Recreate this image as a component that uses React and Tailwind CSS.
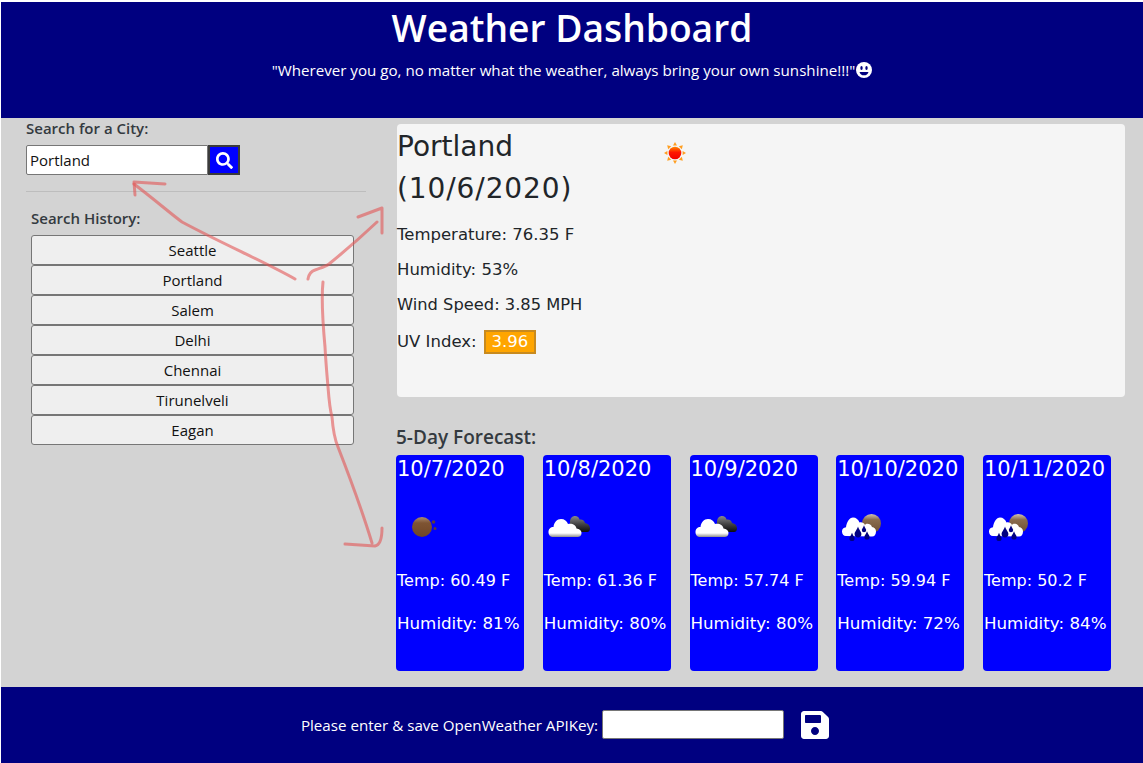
import { FaSave, FaSearch } from "react-icons/fa";

const history = ["Seattle", "Portland", "Salem", "Delhi", "Chennai", "Tirunelveli", "Eagan"];

const forecast = [
  { date: "10/7/2020", icon: "moon", temp: "60.49", humidity: "81" },
  { date: "10/8/2020", icon: "clouds", temp: "61.36", humidity: "80" },
  { date: "10/9/2020", icon: "clouds", temp: "57.74", humidity: "80" },
  { date: "10/10/2020", icon: "rain", temp: "59.94", humidity: "72" },
  { date: "10/11/2020", icon: "rain", temp: "50.2", humidity: "84" },
];

function SunIcon() {
  return (
    <svg width="24" height="24" viewBox="0 0 24 24">
      <defs>
        <linearGradient id="sunFill" x1="0" y1="0" x2="0" y2="1">
          <stop offset="0" stopColor="#ff8a00" />
          <stop offset="0.45" stopColor="#ff1500" />
          <stop offset="1" stopColor="#f00000" />
        </linearGradient>
      </defs>
      <g fill="#ff9d1e">
        <path d="M12 1l2 3.4h-4z" />
        <path d="M12 23l2-3.4h-4z" />
        <path d="M1 12l3.4 2v-4z" />
        <path d="M23 12l-3.4 2v-4z" />
        <path d="M4.2 4.2l4 1-3 3z" />
        <path d="M19.8 4.2l-4 1 3 3z" />
        <path d="M4.2 19.8l4-1-3-3z" />
        <path d="M19.8 19.8l-4-1 3-3z" />
      </g>
      <circle cx="12" cy="12" r="6.3" fill="url(#sunFill)" />
    </svg>
  );
}

function MoonIcon() {
  return (
    <svg width="50" height="50" viewBox="0 0 50 50">
      <defs>
        <linearGradient id="moonFill" x1="0" y1="0" x2="0" y2="1">
          <stop offset="0" stopColor="#a98a6f" />
          <stop offset="0.3" stopColor="#7e5433" />
          <stop offset="1" stopColor="#6f4526" />
        </linearGradient>
      </defs>
      <circle cx="25" cy="26" r="10" fill="url(#moonFill)" />
      <circle cx="36.500" cy="21" r="1.800" fill="#5d3c3a" />
      <circle cx="38" cy="27.500" r="1.500" fill="#5d3c3a" />
    </svg>
  );
}

function CloudsIcon() {
  return (
    <svg width="50" height="50" viewBox="0 0 50 50">
      <defs>
        <linearGradient id="darkCloud" x1="0" y1="0" x2="0" y2="1">
          <stop offset="0" stopColor="#8a8a8a" />
          <stop offset="0.5" stopColor="#444" />
          <stop offset="1" stopColor="#0c0c0c" />
        </linearGradient>
        <linearGradient id="whiteCloud" x1="0" y1="0" x2="0" y2="1">
          <stop offset="0" stopColor="#fff" />
          <stop offset="0.78" stopColor="#fff" />
          <stop offset="1" stopColor="#8d8d8d" />
        </linearGradient>
      </defs>
      <path d="M26 31V21c0-4 2.500-6 5-6 2.500 0 4 1.500 4.500 3.500 3-.5 5 1 5.500 3.500 3 .5 5 2.500 5 5.500 0 1.700-1 3.500-3 3.500z" fill="url(#darkCloud)" />
      <path d="M9 36c-3 0-4.500-2.300-4.500-5 0-3 2-5 5-5 .5-4.500 3.500-8 7.500-8 3.500 0 6 2 7 5 4-1 8 1 8.500 4.500 3 .3 5 2 5 4.500 0 2.500-1.500 4-4 4z" fill="url(#whiteCloud)" />
    </svg>
  );
}

function RainIcon() {
  const drop = (x, y, r) => (
    <path
      key={x}
      d={`M${x} ${y - 2.2 * r}C${x + 0.4 * r} ${y - r} ${x + r} ${y - 0.6 * r} ${x + r} ${y}A${r} ${r} 0 0 1 ${x - r} ${y}C${x - r} ${y - 0.6 * r} ${x - 0.4 * r} ${y - r} ${x} ${y - 2.2 * r}z`}
      fill="#000080"
    />
  );
  return (
    <svg width="50" height="50" viewBox="0 0 50 50">
      <defs>
        <linearGradient id="brownSun" x1="0" y1="0" x2="0" y2="1">
          <stop offset="0" stopColor="#d2c4b4" />
          <stop offset="0.3" stopColor="#8a6c4e" />
          <stop offset="1" stopColor="#6d4f33" />
        </linearGradient>
      </defs>
      <circle cx="34.500" cy="22.500" r="9.500" fill="url(#brownSun)" />
      <path d="M9 35c-2.500 0-4-2-4-4.500 0-2.500 1.500-4 4-4.200.5-5 3.500-9.800 7-9.800 3 0 5.500 2 6.500 5 2.500-.5 4.500.5 5.500 2.500 1-2 6-1.500 7 2 2.500.3 4 2 4 4.500 0 3-1.500 5-4 5z" fill="#fff" />
      {drop(15, 37.500, 2.600)}
      {drop(21, 33, 3.400)}
      {drop(27, 29, 2.200)}
      {drop(30, 36, 2.600)}
    </svg>
  );
}

const icons = { moon: MoonIcon, clouds: CloudsIcon, rain: RainIcon };

function ForecastCard({ day }) {
  const Icon = icons[day.icon];
  return (
    <div className="h-[216px] w-[128px] rounded bg-[#0000ff] pl-px text-[#ffffff]">
      <div className="pt-[2px] text-[21px] leading-[25px]">{day.date}</div>
      <div className="mt-[19px] h-[50px]">
        <Icon />
      </div>
      <div className="mt-[17px] text-[16px] leading-[25px]">Temp: {day.temp} F</div>
      <div className="mt-[18px] text-[16.700px] leading-[25px]">Humidity: {day.humidity}%</div>
    </div>
  );
}

// hand drawn red arrows on top of the page
function Arrows() {
  return (
    <svg
      className="pointer-events-none absolute top-0 left-0"
      width="1143"
      height="763"
      viewBox="0 0 1143 763"
      fill="none"
      stroke="#e25555"
      strokeOpacity="0.6"
      strokeWidth="3"
      strokeLinecap="round"
      strokeLinejoin="round"
    >
      <path d="M295 279C265 262 225 245 182 222C170 213 155 200 134 184" />
      <path d="M165 184L134 182L135 195" />
      <path d="M308 279C309 273 312 271 315 270C320 268 325 267 329 264C345 251 360 238 377 222" />
      <path d="M358 217L382 208L382 233" />
      <path d="M323 282C321 300 323 325 325 347C326 365 327 375 328 387C329 400 330 410 332 417C333 430 335 440 338 447C345 465 362 510 372 543" />
      <path d="M345 544L375 546C380 545 382 538 382 528" />
    </svg>
  );
}

export default function App() {
  return (
    <div className="relative h-[763px] w-[1143px] overflow-hidden bg-white pt-[2px] pl-px font-['Open_Sans','Noto_Sans',sans-serif] text-[#212529]">
      <header className="flex h-[116px] flex-col items-center bg-[#000080] text-white">
        <h1 className="mt-[3px] text-[37.200px] leading-[46px] font-semibold">Weather Dashboard</h1>
        <p className="mt-[7px] flex items-center text-[15.150px] leading-[24px]">
          "Wherever you go, no matter what the weather, always bring your own sunshine!!!"
          <span className="ml-px inline-block h-[16px] w-[16px] rounded-full bg-white">
            <svg width="16" height="16" viewBox="0 0 16 16">
              <ellipse cx="5.500" cy="6" rx="1.200" ry="2" fill="#000080" />
              <ellipse cx="10.500" cy="6" rx="1.200" ry="2" fill="#000080" />
              <path d="M3.500 10a4.700 4.700 0 0 0 9 0z" fill="#000080" />
            </svg>
          </span>
        </p>
      </header>

      <main className="flex h-[569px] bg-[#d3d3d3]">
        <aside className="w-[395px] shrink-0 pl-[25px]">
          <div className="text-[15px] leading-[20px] font-semibold text-[#343a40]">Search for a City:</div>
          <div className="mt-[7px] flex h-[30px] w-[214px]">
            <input
              readOnly
              value="Portland"
              className="h-[30px] w-[182px] rounded-l-[2px] border border-[#767676] bg-white px-[3px] text-[15px] text-[#111111] outline-none"
            />
            <button className="flex h-[30px] w-[32px] items-center justify-center border-2 border-[#3b3b3b] bg-[#0000ff] text-white">
              <FaSearch size={17} />
            </button>
          </div>
          <hr className="mt-[16px] w-[340px] border-t border-[#bdbdbd]" />
          <div className="mt-[16px] pl-[5px] text-[15px] leading-[20px] font-semibold text-[#343a40]">Search History:</div>
          <div className="mt-[7px] ml-[5px] flex w-[323px] flex-col">
            {history.map((city) => (
              <button
                key={city}
                className="h-[30px] rounded-[3px] border border-[#767676] bg-[#efefef] text-center text-[15px] text-[#111111]"
              >
                {city}
              </button>
            ))}
          </div>
        </aside>

        <section className="w-[729px] font-['DejaVu_Sans',sans-serif]">
          <div className="mt-[6px] ml-px h-[273px] w-[728px] rounded bg-[#f5f5f5]">
            <div className="flex">
              <h2 className="w-[266px] pt-[2px] text-[28px] leading-[42px] font-normal">
                Portland
                <br />
                <span className="tracking-[0.9px]">(10/6/2020)</span>
              </h2>
              <div className="mt-[17px]">
                <SunIcon />
              </div>
            </div>
            <p className="mt-[12px] text-[16.500px] leading-[25px]">Temperature: 76.35 F</p>
            <p className="mt-[10px] text-[16.500px] leading-[25px]">Humidity: 53%</p>
            <p className="mt-[10px] text-[16.300px] leading-[25px]">Wind Speed: 3.85 MPH</p>
            <p className="mt-[12px] flex items-center text-[16.500px] leading-[25px]">
              UV Index:
              <span className="ml-[7px] border-2 border-[#c88a1e] bg-[#ffa500] px-[6px] leading-[20px] text-white">3.96</span>
            </p>
          </div>
          <div className="mt-[28px] font-['Open_Sans',sans-serif] text-[19px] leading-[24px] font-semibold text-[#343a40]">
            5-Day Forecast:
          </div>
          <div className="mt-[6px] flex w-[715px] justify-between">
            {forecast.map((day) => (
              <ForecastCard key={day.date} day={day} />
            ))}
          </div>
        </section>
      </main>

      <footer className="flex h-[76px] items-center justify-center bg-[#000080] pr-[12px] text-white">
        <label className="text-[15.150px]">Please enter &amp; save OpenWeather APIKey:</label>
        <input className="mb-[1px] ml-[4px] h-[29px] w-[182px] rounded-[2px] border border-[#767676] bg-white" />
        <FaSave className="ml-[15px]" size={32} />
      </footer>

      <Arrows />
    </div>
  );
}
